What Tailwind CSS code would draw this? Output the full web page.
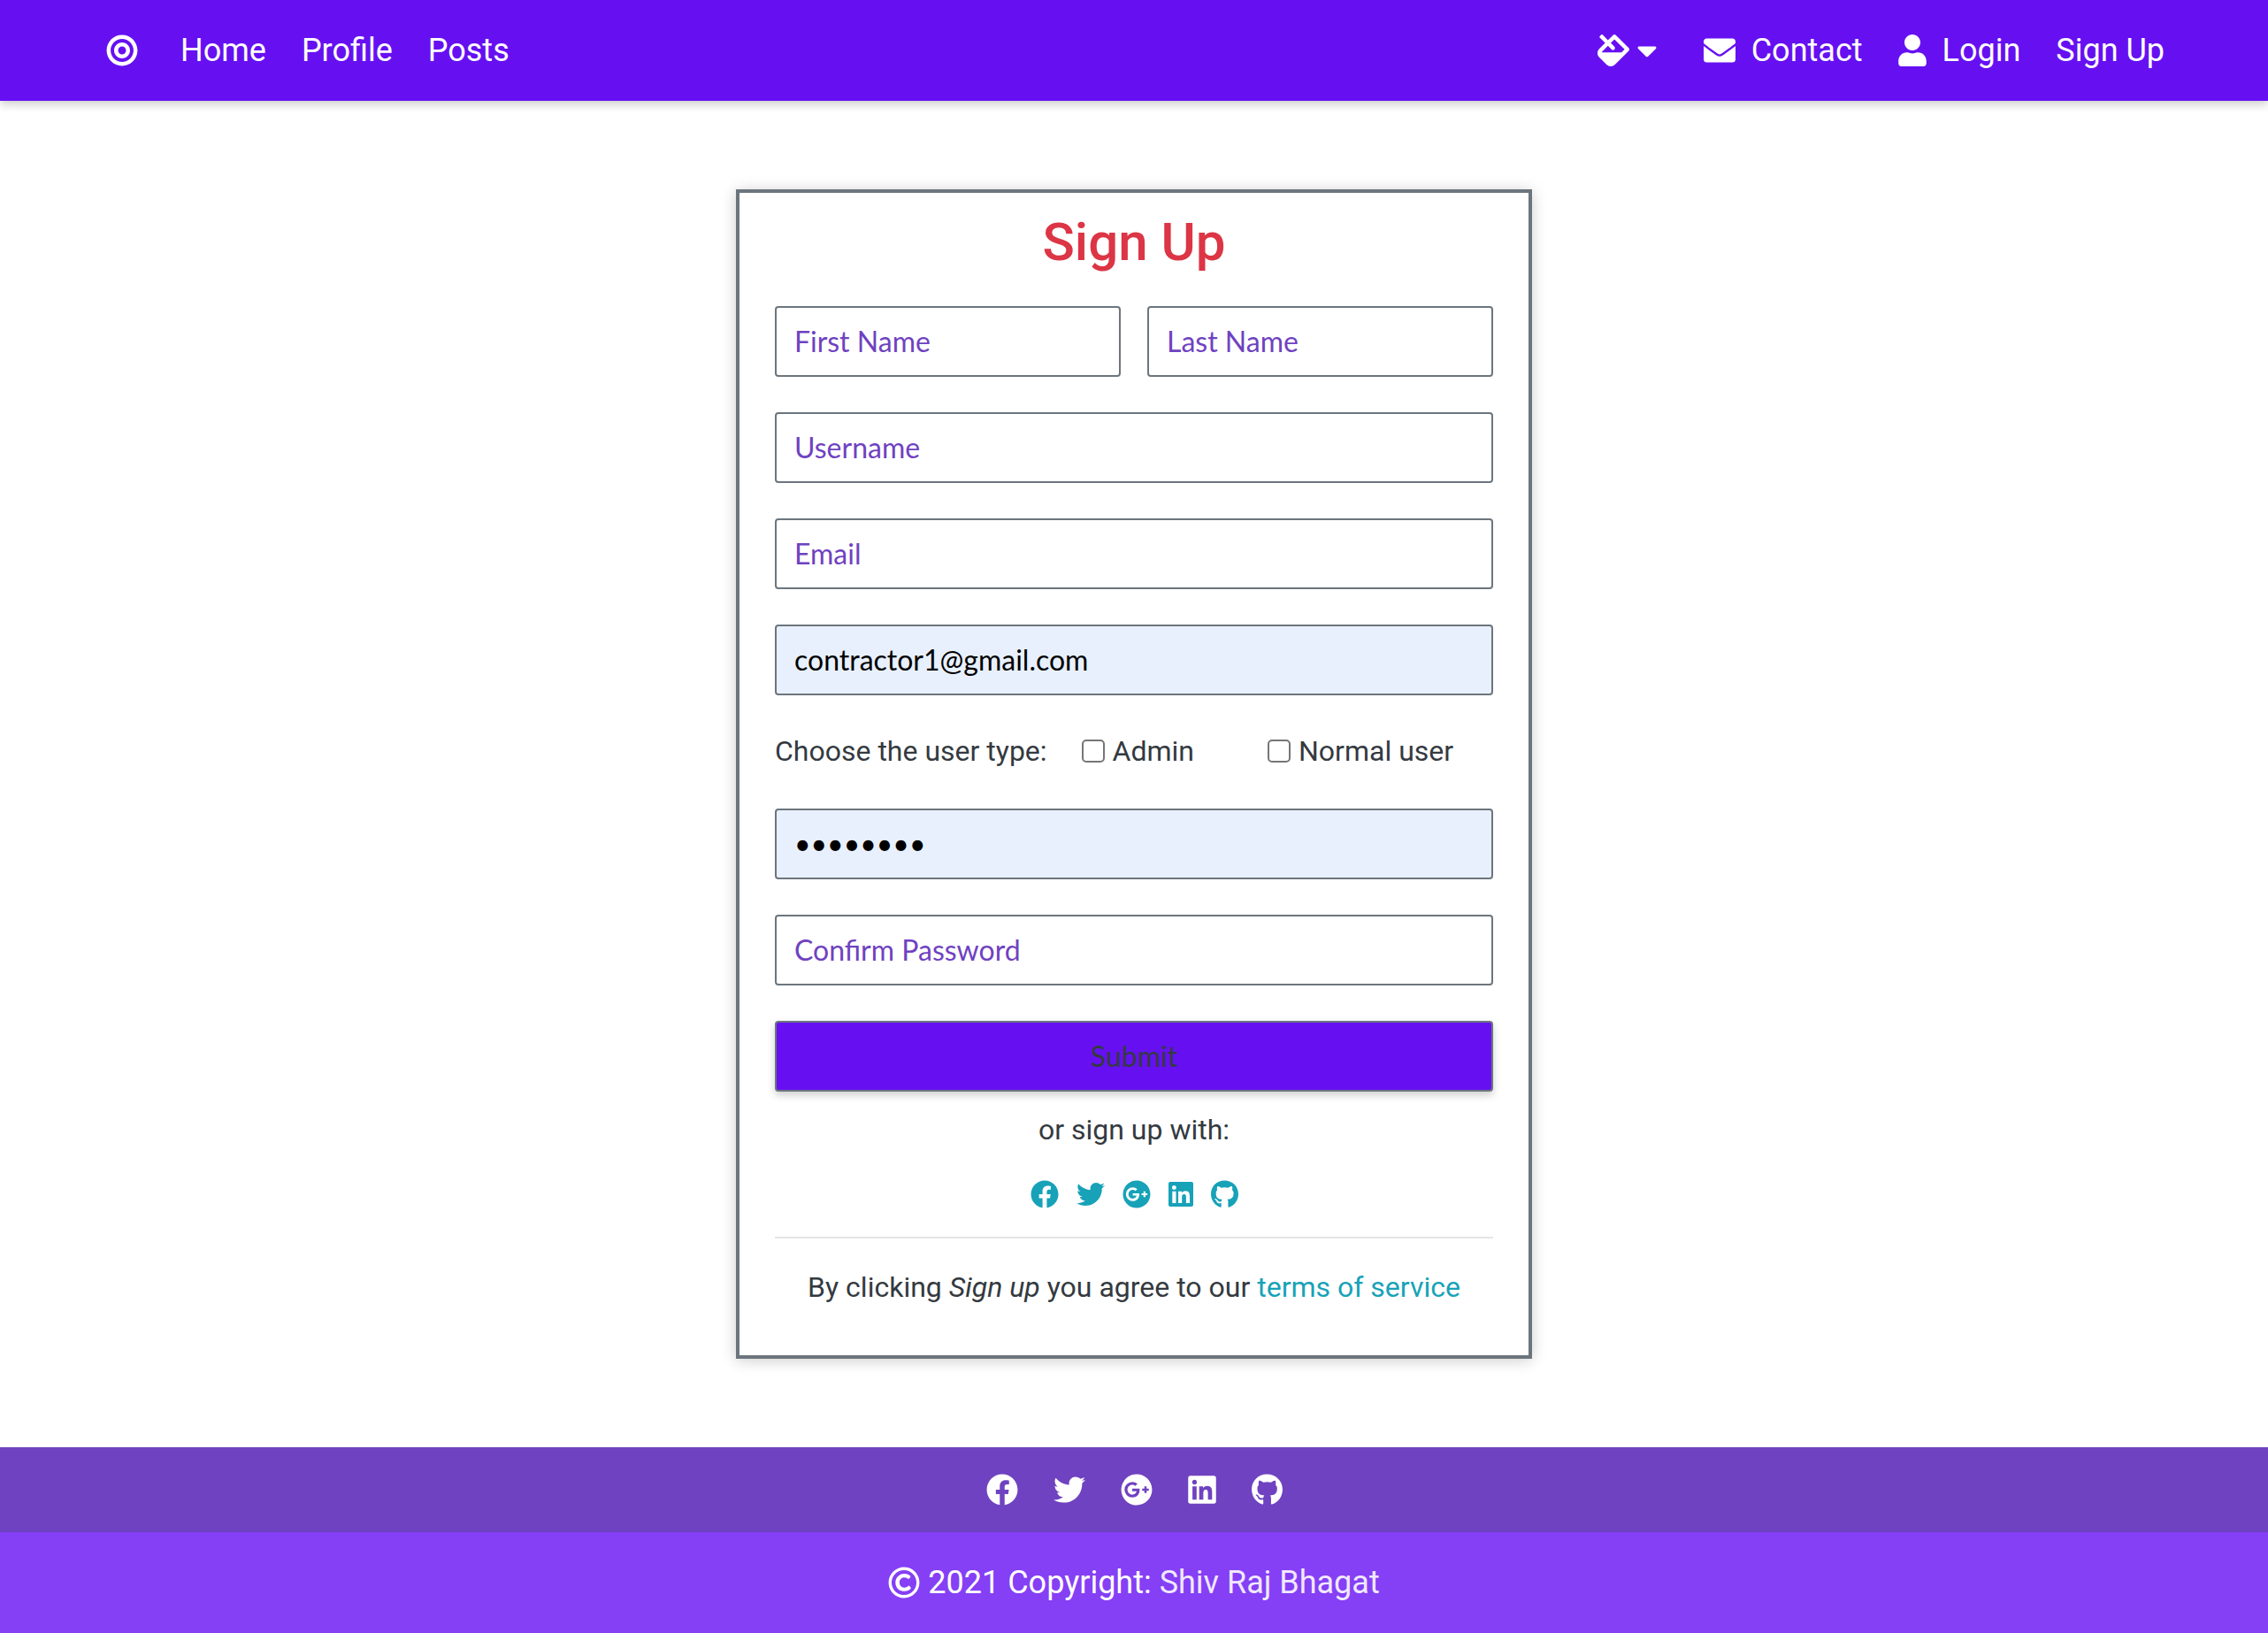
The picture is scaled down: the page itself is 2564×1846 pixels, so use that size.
<!DOCTYPE html>
<html lang="en">
<head>
<meta charset="utf-8">
<meta name="viewport" content="width=device-width, initial-scale=1">
<title>Sign Up</title>
<script src="https://cdn.jsdelivr.net/npm/@tailwindcss/browser@4"></script>
</head>
<body class="flex min-h-screen flex-col bg-white font-['Roboto',sans-serif] text-[32px] leading-[46px] text-[#343a40]">

<svg class="hidden" aria-hidden="true">
  <symbol id="facebook" viewBox="0 0 512 512"><path d="M504 256C504 119 393 8 256 8S8 119 8 256c0 123.78 90.69 226.38 209.25 245V327.69h-63V256h63v-54.64c0-62.15 37-96.48 93.67-96.48 27.14 0 55.52 4.84 55.52 4.84v61h-31.28c-30.8 0-40.41 19.12-40.41 38.73V256h68.78l-11 71.69h-57.78V501C413.31 482.38 504 379.78 504 256z"/></symbol>
  <symbol id="twitter" viewBox="0 0 512 512"><path d="M459.37 151.716c.325 4.548.325 9.097.325 13.645 0 138.72-105.583 298.558-298.558 298.558-59.452 0-114.68-17.219-161.137-47.106 8.447.974 16.568 1.299 25.34 1.299 49.055 0 94.213-16.568 130.274-44.832-46.132-.975-84.792-31.188-98.112-72.772 6.498.974 12.995 1.624 19.818 1.624 9.421 0 18.843-1.3 27.614-3.573-48.081-9.747-84.143-51.98-84.143-102.985v-1.299c13.969 7.797 30.214 12.67 47.431 13.319-28.264-18.843-46.781-51.005-46.781-87.391 0-19.492 5.197-37.36 14.294-52.954 51.655 63.675 129.3 105.258 216.365 109.807-1.624-7.797-2.599-15.918-2.599-24.04 0-57.828 46.782-104.934 104.934-104.934 30.213 0 57.502 12.67 76.67 33.137 23.715-4.548 46.456-13.32 66.599-25.34-7.798 24.366-24.366 44.833-46.132 57.827 21.117-2.273 41.584-8.122 60.426-16.243-14.292 20.791-32.161 39.308-52.628 54.253z"/></symbol>
  <symbol id="google" viewBox="0 0 512 512"><path d="M256,8C119.1,8,8,119.1,8,256S119.1,504,256,504,504,392.9,504,256,392.9,8,256,8ZM185.3,380a124,124,0,0,1,0-248c31.3,0,60.1,11,83,32.3l-33.6,32.6c-13.2-12.9-31.3-19.1-49.4-19.1-42.9,0-77.2,35.5-77.2,78.1S142.3,334,185.3,334c32.6,0,64.9-19.1,70.1-53.3H185.3V238.1H302.2a109.2,109.2,0,0,1,1.9,20.7c0,70.8-47.5,121.2-118.8,121.2ZM415.5,273.8v35.5H380V273.8H344.5V238.3H380V202.8h35.5v35.5h35.2v35.5Z"/></symbol>
  <symbol id="linkedin" viewBox="0 0 448 512"><path d="M416 32H31.9C14.3 32 0 46.5 0 64.3v383.4C0 465.5 14.3 480 31.9 480H416c17.6 0 32-14.5 32-32.3V64.3c0-17.8-14.4-32.3-32-32.3zM135.4 416H69V202.2h66.5V416zm-33.2-243c-21.3 0-38.5-17.3-38.5-38.5S80.9 96 102.2 96c21.2 0 38.5 17.3 38.5 38.5 0 21.3-17.2 38.5-38.5 38.5zm282.1 243h-66.4V312c0-24.8-.5-56.7-34.5-56.7-34.6 0-39.9 27-39.9 54.9V416h-66.4V202.2h63.7v29.2h.9c8.9-16.8 30.6-34.5 62.9-34.5 67.2 0 79.7 44.3 79.7 101.9V416z"/></symbol>
  <symbol id="github" viewBox="0 0 496 512"><path d="M165.9 397.4c0 2-2.3 3.6-5.2 3.6-3.3.3-5.6-1.3-5.6-3.6 0-2 2.3-3.6 5.2-3.6 3-.3 5.6 1.3 5.6 3.6zm-31.1-4.5c-.7 2 1.3 4.3 4.3 4.9 2.6 1 5.6 0 6.2-2s-1.3-4.3-4.3-5.2c-2.6-.7-5.5.3-6.2 2.3zm44.2-1.7c-2.9.7-4.9 2.6-4.6 4.9.3 2 2.9 3.3 5.9 2.6 2.9-.7 4.9-2.6 4.6-4.6-.3-1.9-3-3.2-5.9-2.9zM244.8 8C106.1 8 0 113.3 0 252c0 110.9 69.8 205.8 169.5 239.2 12.8 2.3 17.3-5.6 17.3-12.1 0-6.2-.3-40.4-.3-61.4 0 0-70 15-84.7-29.8 0 0-11.4-29.1-27.8-36.6 0 0-22.9-15.7 1.6-15.4 0 0 24.9 2 38.6 25.8 21.9 38.6 58.6 27.5 72.9 20.9 2.3-16 8.8-27.1 16-33.7-55.9-6.2-112.3-14.3-112.3-110.5 0-27.5 7.6-41.3 23.6-58.9-2.6-6.5-11.1-33.3 2.6-67.9 20.9-6.5 69 27 69 27 20-5.6 41.5-8.5 62.8-8.5s42.8 2.9 62.8 8.5c0 0 48.1-33.6 69-27 13.7 34.7 5.2 61.4 2.6 67.9 16 17.7 25.8 31.5 25.8 58.9 0 96.5-58.9 104.2-114.8 110.5 9.2 7.9 17 22.9 17 46.4 0 33.7-.3 75.4-.3 83.6 0 6.5 4.6 14.4 17.3 12.1C428.2 457.8 496 362.9 496 252 496 113.3 383.5 8 244.8 8z"/></symbol>
</svg>

<header class="relative bg-[#6610f2] shadow-[0_4px_10px_rgba(0,0,0,0.2)]">
  <nav class="flex h-[114px] items-center justify-between pr-[117px] pl-[120px] text-[36px] leading-[54px] text-white">
    <div class="flex items-center gap-10">
      <a href="#" aria-label="Brand" class="mr-2"><svg class="h-9 w-9 fill-current" viewBox="-8 0 512 512"><path d="M248 8C111.03 8 0 119.03 0 256s111.03 248 248 248 248-111.03 248-248S384.97 8 248 8zm0 432c-101.69 0-184-82.29-184-184 0-101.69 82.29-184 184-184 101.69 0 184 82.29 184 184 0 101.69-82.29 184-184 184zm0-312c-70.69 0-128 57.31-128 128s57.31 128 128 128 128-57.31 128-128-57.31-128-128-128zm0 192c-35.29 0-64-28.71-64-64s28.71-64 64-64 64 28.71 64 64-28.71 64-64 64z"/></svg></a>
      <a href="#">Home</a>
      <a href="#">Profile</a>
      <a href="#">Posts</a>
    </div>
    <div class="flex items-center gap-10">
      <button type="button" aria-label="Theme colour" class="mr-3 flex items-center gap-2">
        <svg class="h-9 w-9 fill-current" viewBox="0 0 512 512"><path d="M502.63 217.06L294.94 9.37C288.69 3.12 280.5 0 272.31 0s-16.38 3.12-22.62 9.37l-81.58 81.58L81.93 4.77c-6.24-6.25-16.38-6.25-22.62 0L36.69 27.38c-6.24 6.25-6.24 16.38 0 22.63l86.19 86.18-94.76 94.76c-37.49 37.49-37.49 98.26 0 135.75l117.19 117.19c18.75 18.74 43.31 28.12 67.87 28.12 24.57 0 49.13-9.37 67.88-28.12l221.57-221.57c12.49-12.5 12.49-32.76 0-45.26zm-116.22 70.97H65.93c1.36-3.84 3.57-7.98 7.43-11.83l13.15-13.15 81.61-81.61 58.61 58.6c12.49 12.49 32.75 12.49 45.24 0 12.49-12.49 12.49-32.75 0-45.24l-58.61-58.6 58.95-58.95 162.45 162.44-48.35 48.34z"/></svg>
        <svg class="h-9 w-6 fill-current" viewBox="0 0 320 512"><path d="M31.3 192h257.3c17.8 0 26.7 21.5 14.1 34.1L174.1 354.8c-7.8 7.8-20.5 7.8-28.3 0L17.2 226.1C4.6 213.5 13.5 192 31.3 192z"/></svg>
      </button>
      <a href="#" class="flex items-center gap-[18px]">
        <svg class="h-9 w-9 fill-current" viewBox="0 0 512 512"><path d="M502.3 190.8c3.9-3.1 9.7-.2 9.7 4.7V400c0 26.5-21.5 48-48 48H48c-26.5 0-48-21.5-48-48V195.6c0-5 5.7-7.8 9.7-4.7 22.4 17.4 52.1 39.5 154.1 113.6 21.1 15.4 56.7 47.8 92.2 47.6 35.7.3 72-32.8 92.3-47.6 102-74.1 131.6-96.3 154-113.7zM256 320c23.2.4 56.6-29.2 73.4-41.4 132.7-96.3 142.8-104.7 173.4-128.7 5.8-4.5 9.2-11.5 9.2-18.9v-19c0-26.5-21.5-48-48-48H48c-26.5 0-48 21.5-48 48v19c0 7.4 3.4 14.3 9.2 18.9 30.6 23.9 40.7 32.4 173.4 128.7 16.8 12.2 50.2 41.8 73.4 41.4z"/></svg>
        Contact
      </a>
      <a href="#" class="flex items-center gap-[18px]">
        <svg class="h-9 w-8 fill-current" viewBox="0 0 448 512"><path d="M224 256c70.7 0 128-57.3 128-128S294.7 0 224 0 96 57.3 96 128s57.3 128 128 128zm89.6 32h-16.7c-22.2 10.2-46.9 16-72.9 16s-50.6-5.8-72.9-16h-16.7C60.2 288 0 348.2 0 422.4V464c0 26.5 21.5 48 48 48h352c26.5 0 48-21.5 48-48v-41.6c0-74.2-60.2-134.4-134.4-134.4z"/></svg>
        Login
      </a>
      <a href="#">Sign Up</a>
    </div>
  </nav>
</header>

<main class="flex-1 px-4 py-[100px]">
  <form class="mx-auto max-w-[900px] border-4 border-[#6c757d] px-10 pt-5 pb-[54px] text-center shadow-[0_2px_16px_rgba(0,0,0,0.2)]">
    <h1 class="mb-9 text-[60px] leading-[72px] font-medium text-[#dc3545]">Sign Up</h1>
    <div class="flex flex-col gap-10">
      <div class="grid grid-cols-2 gap-[30px]">
        <input type="text" aria-label="First Name" placeholder="First Name" class="h-20 w-full min-w-0 rounded-[4px] border-2 border-[#6c757d] px-5 pb-[2px] font-['Lato',sans-serif] placeholder:text-[#6f42c1]">
        <input type="text" aria-label="Last Name" placeholder="Last Name" class="h-20 w-full min-w-0 rounded-[4px] border-2 border-[#6c757d] px-5 pb-[2px] font-['Lato',sans-serif] placeholder:text-[#6f42c1]">
      </div>
      <input type="text" aria-label="Username" placeholder="Username" class="h-20 w-full rounded-[4px] border-2 border-[#6c757d] px-5 pb-[2px] font-['Lato',sans-serif] placeholder:text-[#6f42c1]">
      <input type="email" aria-label="Email" placeholder="Email" class="h-20 w-full rounded-[4px] border-2 border-[#6c757d] px-5 pb-[2px] font-['Lato',sans-serif] placeholder:text-[#6f42c1]">
      <input type="text" aria-label="Contact" value="contractor1@gmail.com" class="h-20 w-full rounded-[4px] border-2 border-[#6c757d] bg-[#e8f0fe] px-5 pb-[2px] font-['Lato',sans-serif] text-black">
      <div class="flex items-center pb-[2px]">
        <span class="mr-[39px]">Choose the user type:</span>
        <label class="mr-[83px] flex items-center gap-[9px]"><input type="checkbox" class="size-[26px] appearance-none rounded-[5px] border-2 border-[#767676] bg-white">Admin</label>
        <label class="flex items-center gap-[9px]"><input type="checkbox" class="size-[26px] appearance-none rounded-[5px] border-2 border-[#767676] bg-white">Normal user</label>
      </div>
      <input type="password" aria-label="Password" value="password" class="h-20 w-full rounded-[4px] border-2 border-[#6c757d] bg-[#e8f0fe] px-5 pb-[2px] font-['Lato',sans-serif] text-black">
      <input type="password" aria-label="Confirm Password" placeholder="Confirm Password" class="h-20 w-full rounded-[4px] border-2 border-[#6c757d] px-5 pb-[2px] font-['Lato',sans-serif] placeholder:text-[#6f42c1]">
      <button type="submit" class="h-20 w-full rounded-[4px] border-2 border-[#6c757d] bg-[#6610f2] font-['Lato',sans-serif] shadow-[0_4px_10px_rgba(0,0,0,0.2)]">Submit</button>
    </div>
    <p class="mt-5 mb-[26px]">or sign up with:</p>
    <div class="flex h-12 items-center justify-center gap-5 text-[#17a2b8]">
      <a href="#" aria-label="Facebook"><svg class="size-8 fill-current"><use href="#facebook"/></svg></a>
      <a href="#" aria-label="Twitter"><svg class="size-8 fill-current"><use href="#twitter"/></svg></a>
      <a href="#" aria-label="Google Plus"><svg class="size-8 fill-current"><use href="#google"/></svg></a>
      <a href="#" aria-label="LinkedIn"><svg class="h-8 w-7 fill-current"><use href="#linkedin"/></svg></a>
      <a href="#" aria-label="GitHub"><svg class="h-8 w-[31px] fill-current"><use href="#github"/></svg></a>
    </div>
    <hr class="mt-6 mb-8 border-t-2 border-black/10">
    <p>By clicking <em>Sign up</em> you agree to our <a href="#" class="text-[#17a2b8]">terms of service</a></p>
  </form>
</main>

<footer class="text-white">
  <div class="flex h-24 items-center justify-center gap-10 bg-[#6f42c1]">
    <a href="#" aria-label="Facebook"><svg class="size-9 fill-current"><use href="#facebook"/></svg></a>
    <a href="#" aria-label="Twitter"><svg class="size-9 fill-current"><use href="#twitter"/></svg></a>
    <a href="#" aria-label="Google Plus"><svg class="size-9 fill-current"><use href="#google"/></svg></a>
    <a href="#" aria-label="LinkedIn"><svg class="h-9 w-8 fill-current"><use href="#linkedin"/></svg></a>
    <a href="#" aria-label="GitHub"><svg class="h-9 w-[35px] fill-current"><use href="#github"/></svg></a>
  </div>
  <div class="flex h-[114px] items-center justify-center gap-[9px] bg-[#853ff5] text-[36px] leading-[54px]">
    <svg class="size-9 fill-current" viewBox="0 0 512 512"><path d="M256 8C119.033 8 8 119.033 8 256s111.033 248 248 248 248-111.033 248-248S392.967 8 256 8zm0 448c-110.532 0-200-89.451-200-200 0-110.531 89.451-200 200-200 110.532 0 200 89.451 200 200 0 110.532-89.451 200-200 200zm107.351-101.064c-9.614 9.712-45.53 41.396-104.065 41.396-82.43 0-140.484-61.425-140.484-141.567 0-79.152 60.275-139.401 139.762-139.401 55.531 0 88.738 26.62 97.593 34.778a11.965 11.965 0 0 1 1.936 15.322l-18.155 28.113c-3.841 5.95-11.966 7.282-17.499 2.921-8.595-6.776-31.814-22.538-61.708-22.538-48.303 0-77.916 35.33-77.916 80.082 0 41.589 26.888 83.692 78.277 83.692 32.657 0 56.843-19.039 65.726-27.225 5.27-4.857 13.596-4.039 17.82 1.738l19.865 27.17a11.947 11.947 0 0 1-1.152 15.518z"/></svg>
    <p>2021 Copyright: <a href="#" class="text-[#f0e8fe]">Shiv Raj Bhagat</a></p>
  </div>
</footer>

</body>
</html>
